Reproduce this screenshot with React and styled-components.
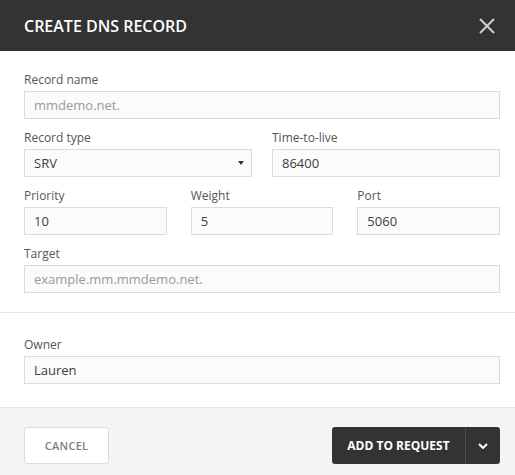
import React from "react";
import styled, { createGlobalStyle } from "styled-components";

const Global = createGlobalStyle`
  html, body { margin: 0; padding: 0; background: #ffffff; }
  body { font-family: "Open Sans", "Noto Sans", sans-serif; }
  * { box-sizing: border-box; }
`;

const Modal = styled.div`
  width: 515px;
  background: #fff;
  display: flex;
  flex-direction: column;
`;

const Header = styled.div`
  height: 51px;
  background: #333333;
  display: flex;
  align-items: center;
  justify-content: space-between;
  padding: 0 20px 0 24px;
`;

const Title = styled.h1`
  margin: 0;
  font-size: 16px;
  font-weight: 600;
  color: #ffffff;
  letter-spacing: 0;
`;

const Close = styled.button`
  width: 16px;
  height: 16px;
  padding: 0;
  border: 0;
  background: none;
  display: flex;
  cursor: pointer;
`;

const Section = styled.div`
  padding: ${(p) => p.$pad};
  border-bottom: 1px solid #e9e9e9;
  display: flex;
  flex-direction: column;
  gap: 10px;
`;

const Row = styled.div`
  display: grid;
  grid-template-columns: repeat(${(p) => p.$cols}, 1fr);
  column-gap: ${(p) => p.$gap}px;
`;

const Field = styled.label`
  display: flex;
  flex-direction: column;
  gap: 2px;
`;

const Label = styled.span`
  font-size: 12px;
  line-height: 18px;
  font-weight: 500;
  color: #555555;
`;

const Input = styled.div`
  height: 28px;
  border: 1px solid #dcdcdc;
  background: #fbfbfb;
  padding: 0 9px;
  display: flex;
  align-items: center;
  justify-content: space-between;
  font-size: 13px;
  color: ${(p) => (p.$placeholder ? "#9a9a9a" : "#3d3d3d")};
`;

const Caret = styled.span`
  width: 0;
  height: 0;
  border-left: 3px solid transparent;
  border-right: 3px solid transparent;
  border-top: 4px solid #333;
  margin-right: -2px;
`;

const Footer = styled.div`
  background: #f5f5f5;
  padding: 19px 15px 20px 24px;
  display: flex;
  justify-content: space-between;
  align-items: center;
`;

const CancelButton = styled.button`
  width: 85px;
  height: 37px;
  border: 1px solid #dddddd;
  border-radius: 3px;
  background: #ffffff;
  font-family: inherit;
  font-size: 11px;
  font-weight: 600;
  color: #808080;
  letter-spacing: 0.3px;
  padding: 0;
`;

const SplitButton = styled.div`
  display: flex;
  height: 37px;
  border-radius: 3px;
  background: #333333;
  overflow: hidden;
`;

const MainAction = styled.button`
  width: 134px;
  border: 0;
  background: none;
  color: #fff;
  font-family: inherit;
  font-size: 12px;
  font-weight: 700;
  padding: 0;
  border-right: 1px solid #4d4d4d;
`;

const MenuAction = styled.button`
  width: 34px;
  border: 0;
  background: none;
  display: flex;
  align-items: center;
  justify-content: center;
  padding: 0;
`;

function TextField({ label, value, placeholder, select }) {
  return (
    <Field>
      <Label>{label}</Label>
      <Input $placeholder={placeholder}>
        <span>{value}</span>
        {select && <Caret />}
      </Input>
    </Field>
  );
}

export default function App() {
  return (
    <>
      <Global />
      <Modal>
        <Header>
          <Title>CREATE DNS RECORD</Title>
          <Close aria-label="Close">
            <svg width="16" height="16" viewBox="0 0 16 16">
              <path d="M1 1L15 15M15 1L1 15" stroke="#cfcfcf" strokeWidth="2" />
            </svg>
          </Close>
        </Header>
        <Section $pad="20px 15px 19px 24px">
          <TextField label="Record name" value="mmdemo.net." placeholder />
          <Row $cols={2} $gap={20}>
            <TextField label="Record type" value="SRV" select />
            <TextField label="Time-to-live" value="86400" />
          </Row>
          <Row $cols={3} $gap={24}>
            <TextField label="Priority" value="10" />
            <TextField label="Weight" value="5" />
            <TextField label="Port" value="5060" />
          </Row>
          <TextField label="Target" value="example.mm.mmdemo.net." placeholder />
        </Section>
        <Section $pad="23px 15px 23px 24px">
          <TextField label="Owner" value="Lauren" />
        </Section>
        <Footer>
          <CancelButton>CANCEL</CancelButton>
          <SplitButton>
            <MainAction>ADD TO REQUEST</MainAction>
            <MenuAction aria-label="More">
              <svg width="10" height="6" viewBox="0 0 10 6">
                <path d="M1 1L5 5L9 1" stroke="#fff" strokeWidth="2" fill="none" />
              </svg>
            </MenuAction>
          </SplitButton>
        </Footer>
      </Modal>
    </>
  );
}
